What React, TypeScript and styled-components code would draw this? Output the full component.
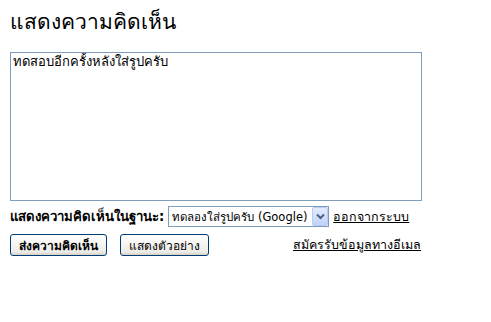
import React from 'react';
import styled, { createGlobalStyle } from 'styled-components';

const GlobalStyle = createGlobalStyle`
  body {
    margin: 0;
    background: #ffffff;
    font-family: Tahoma, "DejaVu Sans", "Noto Sans", sans-serif;
    color: #000000;
  }
`;

const Page = styled.div`
  width: 411px;
  padding: 8px 10px;
`;

const Title = styled.h2`
  margin: 0 0 16px;
  font-size: 21px;
  font-weight: normal;
  line-height: 28px;
`;

const CommentBox = styled.textarea`
  display: block;
  box-sizing: border-box;
  width: 412px;
  height: 149px;
  margin: 0;
  padding: 0 2px;
  border: 1px solid #7f9db9;
  font-family: inherit;
  font-size: 13px;
  line-height: 18px;
  resize: none;
  outline: none;
`;

const IdentityRow = styled.div`
  display: flex;
  align-items: center;
  gap: 4px;
  margin-top: 5px;
  font-size: 13px;
`;

const Label = styled.b`
  font-weight: bold;
  font-size: 13.2px;
`;

const SelectWrap = styled.div`
  position: relative;
  display: flex;
`;

const Select = styled.select`
  appearance: none;
  box-sizing: border-box;
  height: 21px;
  width: 161px;
  padding: 0 18px 0 3px;
  border: 1px solid #7f9db9;
  font-family: inherit;
  font-size: 11.5px;
  background: #fff;
  color: #000;
  outline: none;
`;

const Arrow = styled.span`
  position: absolute;
  right: 1px;
  top: 1px;
  bottom: 1px;
  width: 16px;
  box-sizing: border-box;
  display: flex;
  align-items: center;
  justify-content: center;
  border: 1px solid #b7cbf3;
  border-radius: 2px;
  background: linear-gradient(#e3ebfd, #c1d3fb);
  pointer-events: none;
`;

const Link = styled.a`
  color: #000;
  text-decoration: underline;
  font-size: 12.5px;
`;

const ActionRow = styled.div`
  display: flex;
  align-items: center;
  gap: 13px;
  margin-top: 7px;
`;

const Button = styled.button<{ $primary?: boolean }>`
  height: 22px;
  padding: 0 8px;
  border: 1px solid #003c74;
  border-radius: 3px;
  background: linear-gradient(#ffffff, #ecebe6 85%, #d6d0c5);
  font-family: inherit;
  font-size: 12px;
  font-weight: ${(p) => (p.$primary ? 'bold' : 'normal')};
  color: #000;
`;

const Spacer = styled.div`
  flex: 1;
`;

const App: React.FC = () => {
  return (
    <>
      <GlobalStyle />
      <Page>
        <Title>แสดงความคิดเห็น</Title>
        <CommentBox defaultValue="ทดสอบอีกครั้งหลังใส่รูปครับ" />
        <IdentityRow>
          <Label>แสดงความคิดเห็นในฐานะ:</Label>
          <SelectWrap>
            <Select defaultValue="google">
              <option value="google">ทดลองใส่รูปครับ (Google)</option>
            </Select>
            <Arrow>
              <svg width="9" height="7" viewBox="0 0 9 7">
                <path d="M1 1.5 L4.5 5 L8 1.5" fill="none" stroke="#4d6185" strokeWidth="2" />
              </svg>
            </Arrow>
          </SelectWrap>
          <Link href="#">ออกจากระบบ</Link>
        </IdentityRow>
        <ActionRow>
          <Button $primary>ส่งความคิดเห็น</Button>
          <Button>แสดงตัวอย่าง</Button>
          <Spacer />
          <Link href="#">สมัครรับข้อมูลทางอีเมล</Link>
        </ActionRow>
      </Page>
    </>
  );
};

export default App;
